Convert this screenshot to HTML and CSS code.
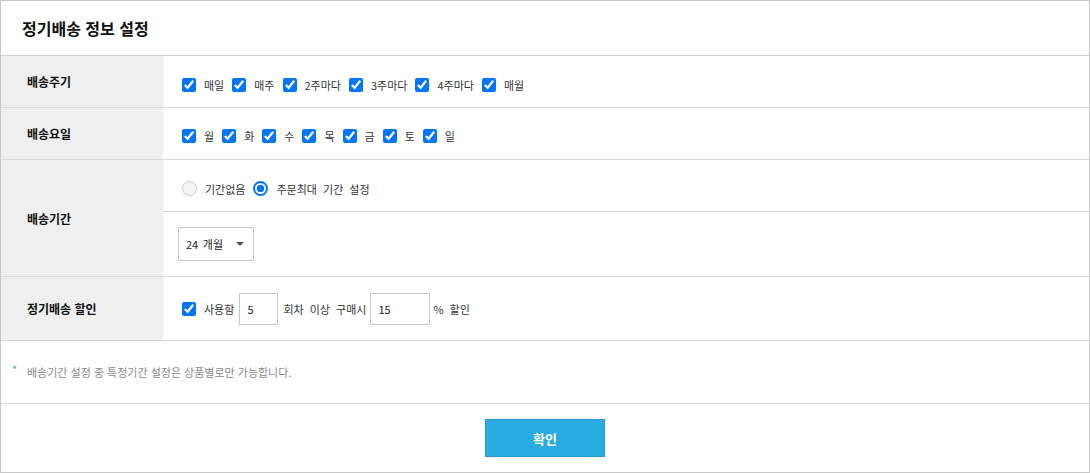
FILE: index.html
```html
<!DOCTYPE html>
<html lang="ko">
<head>
  <meta charset="UTF-8" />
  <meta name="viewport" content="width=device-width, initial-scale=1.0" />
  <title>정기배송 정보 설정</title>
  <link rel="stylesheet" href="styles.css">
</head>
<body>
  <div class="panel">
    <div class="panel-title">정기배송 정보 설정</div>

    <div class="row">
      <div class="label">배송주기</div>
      <div class="field shift">
        <label class="opt"><input type="checkbox" checked> 매일</label>
        <label class="opt"><input type="checkbox" checked> 매주</label>
        <label class="opt"><input type="checkbox" checked> 2주마다</label>
        <label class="opt"><input type="checkbox" checked> 3주마다</label>
        <label class="opt"><input type="checkbox" checked> 4주마다</label>
        <label class="opt"><input type="checkbox" checked> 매월</label>
      </div>
    </div>

    <div class="row">
      <div class="label">배송요일</div>
      <div class="field shift-sm">
        <label class="opt"><input type="checkbox" checked> 월</label>
        <label class="opt"><input type="checkbox" checked> 화</label>
        <label class="opt"><input type="checkbox" checked> 수</label>
        <label class="opt"><input type="checkbox" checked> 목</label>
        <label class="opt"><input type="checkbox" checked> 금</label>
        <label class="opt"><input type="checkbox" checked> 토</label>
        <label class="opt"><input type="checkbox" checked> 일</label>
      </div>
    </div>

    <div class="row row-tall">
      <div class="label">배송기간</div>
      <div class="stack">
        <div class="field sub shift">
          <label class="opt"><input type="radio" name="period" class="radio" disabled> 기간없음</label>
          <label class="opt"><input type="radio" name="period" class="radio" checked> 주문최대 기간 설정</label>
        </div>
        <div class="field sub-select">
          <div class="select-wrap">
            <select class="select">
              <option>24 개월</option>
              <option>12 개월</option>
              <option>6 개월</option>
            </select>
          </div>
        </div>
      </div>
    </div>

    <div class="row row-discount">
      <div class="label">정기배송 할인</div>
      <div class="field tight">
        <label class="opt"><input type="checkbox" checked> 사용함</label>
        <input type="text" class="num" value="5">
        <span>회차 이상 구매시</span>
        <input type="text" class="num wide" value="15">
        <span>% 할인</span>
      </div>
    </div>

    <div class="note"><span class="star">*</span>배송기간 설정 중 특정기간 설정은 상품별로만 가능합니다.</div>

    <div class="actions">
      <button class="btn">확인</button>
    </div>
  </div>
</body>
</html>
```

FILE: styles.css
```css
body {
  margin: 0;
  font-family: "Noto Sans CJK KR", "Noto Sans", sans-serif;
  color: #222;
  background: #fff;
}
.panel {
  width: 1090px;
  height: 473px;
  box-sizing: border-box;
  border: 1px solid #c8c8c8;
}
.panel-title {
  height: 54px;
  padding-left: 21px;
  display: flex;
  align-items: center;
  font-size: 16px;
  font-weight: bold;
  color: #111;
  border-bottom: 1px solid #cfcfcf;
}
.row {
  display: flex;
  height: 51px;
  border-bottom: 1px solid #d6d6d6;
}
.row-tall {
  height: auto;
}
.row-discount {
  height: 63px;
}
.label {
  width: 162px;
  flex-shrink: 0;
  background: #efefef;
  padding-left: 26px;
  box-sizing: border-box;
  display: flex;
  align-items: center;
  font-size: 12px;
  font-weight: bold;
  color: #111;
}
.field {
  flex: 1;
  display: flex;
  align-items: center;
  gap: 8px;
  padding-left: 19px;
  font-size: 11px;
  word-spacing: 1.5px;
  color: #333;
}
.shift {
  padding-top: 6px;
  box-sizing: border-box;
}
.shift-sm {
  padding-top: 4px;
  box-sizing: border-box;
}
.stack {
  flex: 1;
  display: flex;
  flex-direction: column;
}
.stack .field {
  flex: none;
  box-sizing: border-box;
}
.sub {
  height: 52px;
  word-spacing: 3px;
  border-bottom: 1px solid #d6d6d6;
}
.sub-select {
  height: 64px;
  padding-left: 15px;
}
.opt {
  display: flex;
  align-items: center;
  gap: 8px;
  white-space: nowrap;
}
.opt input[type="checkbox"] {
  width: 14px;
  height: 14px;
  margin: 0;
  accent-color: #0075ff;
}
.radio {
  appearance: none;
  width: 15px;
  height: 15px;
  margin: 0;
  border-radius: 50%;
  border: 1px solid #cdcdcd;
  background: #f4f4f4;
  box-sizing: border-box;
}
.radio:checked {
  border: 2px solid #0075ff;
  background: radial-gradient(circle, #0075ff 0 3.5px, #fff 4px);
}
.select-wrap {
  position: relative;
  width: 76px;
  height: 34px;
}
.select {
  appearance: none;
  width: 100%;
  height: 100%;
  border: 1px solid #c8c8c8;
  background: #fff;
  padding: 0 0 0 7px;
  font-family: inherit;
  font-size: 11px;
  word-spacing: 1.5px;
  color: #222;
  border-radius: 0;
  outline: none;
}
.select-wrap::after {
  content: "";
  position: absolute;
  right: 10px;
  top: 15px;
  border-left: 4px solid transparent;
  border-right: 4px solid transparent;
  border-top: 4px solid #555;
  pointer-events: none;
}
.tight {
  gap: 0;
  word-spacing: 3px;
}
.tight .opt {
  margin-right: 5px;
}
.num {
  width: 39px;
  height: 32px;
  box-sizing: border-box;
  border: 1px solid #c8c8c8;
  padding: 0 0 0 7px;
  font-family: inherit;
  font-size: 11px;
  color: #222;
  margin-right: 5px;
  outline: none;
}
.num.wide {
  width: 60px;
  margin-left: 4px;
  margin-right: 3px;
}
.note {
  height: 62px;
  display: flex;
  align-items: center;
  padding-left: 11px;
  font-size: 11px;
  color: #888;
  border-bottom: 1px solid #d6d6d6;
}
.star {
  color: #3d9be0;
  width: 15px;
  position: relative;
  top: -3px;
}
.actions {
  display: flex;
  justify-content: center;
  padding-top: 15px;
}
.btn {
  width: 120px;
  height: 38px;
  background: #29abe2;
  border: 1px solid #2a9ad4;
  color: #fff;
  font-family: inherit;
  font-size: 13px;
  font-weight: bold;
  cursor: pointer;
}
```
